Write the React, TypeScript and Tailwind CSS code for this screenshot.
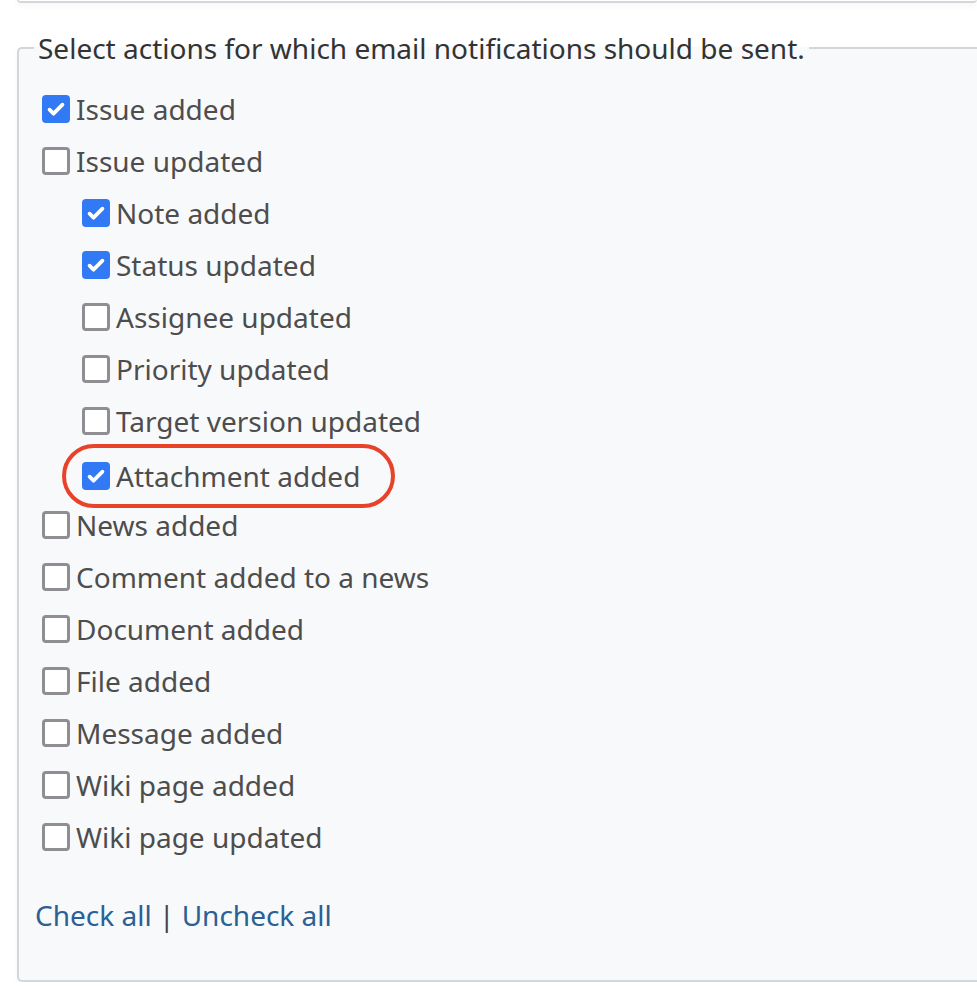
import React from "react";

type Item = { label: string; checked: boolean; indent?: boolean; highlight?: boolean };

const items: Item[] = [
  { label: "Issue added", checked: true },
  { label: "Issue updated", checked: false },
  { label: "Note added", checked: true, indent: true },
  { label: "Status updated", checked: true, indent: true },
  { label: "Assignee updated", checked: false, indent: true },
  { label: "Priority updated", checked: false, indent: true },
  { label: "Target version updated", checked: false, indent: true },
  { label: "Attachment added", checked: true, indent: true, highlight: true },
  { label: "News added", checked: false },
  { label: "Comment added to a news", checked: false },
  { label: "Document added", checked: false },
  { label: "File added", checked: false },
  { label: "Message added", checked: false },
  { label: "Wiki page added", checked: false },
  { label: "Wiki page updated", checked: false },
];

function Box({ checked }: { checked: boolean }) {
  if (checked) {
    return (
      <span className="flex h-[28px] w-[28px] shrink-0 items-center justify-center rounded-[4px] bg-[#3279f5]">
        <svg width="22" height="22" viewBox="0 0 16 16" fill="none">
          <path d="M3.3 8.5l2.9 2.9L12.7 4.8" stroke="white" strokeWidth="2.7" strokeLinecap="round" strokeLinejoin="round" />
        </svg>
      </span>
    );
  }
  return <span className="h-[28px] w-[28px] shrink-0 rounded-[4px] border-[3px] border-[#8e8e93] bg-white" />;
}

export default function App() {
  return (
    <div className="min-h-[994px] bg-white pl-[17px] font-['Noto_Sans',sans-serif]">
      <div className="-mt-[20px] h-[23px] rounded-b-[4px] border-b-2 border-l border-[#d3d6db] bg-white shadow-[0_3px_6px_rgba(0,0,0,0.04)]" />

      <fieldset className="mt-[29px] h-[950px] rounded-l-[5px] border-y-2 border-l-2 border-[#d3d6db] bg-[#f8f9fb] pl-[15px] shadow-[0_2px_4px_rgba(0,0,0,0.04)]">
        <legend className="px-[4px] text-[28px] leading-[32px] text-[#333333]">
          Select actions for which email notifications should be sent.
        </legend>

        <div className="mt-[19px] flex flex-col">
          {items.map((it) => (
            <div key={it.label} className={`flex h-[52px] items-center ${it.indent ? "pl-[48px]" : "pl-[8px]"}`}>
              <div
                className={
                  it.highlight
                    ? "-ml-[20px] mt-[5px] flex items-center rounded-full border-[4px] border-[#e8432a] py-[13px] pl-[16px] pr-[31px]"
                    : "flex items-center"
                }
              >
                <Box checked={it.checked} />
                <span className="ml-[6px] text-[28px] leading-[30px] text-[#4d4d4d]">{it.label}</span>
              </div>
            </div>
          ))}
        </div>

        <div className="mt-[36px] pl-[1px] text-[28px] leading-[32px]">
          <a className="text-[#2a6095]">Check all</a>
          <span className="text-[#444444]"> | </span>
          <a className="text-[#2a6095]">Uncheck all</a>
        </div>
      </fieldset>
    </div>
  );
}
